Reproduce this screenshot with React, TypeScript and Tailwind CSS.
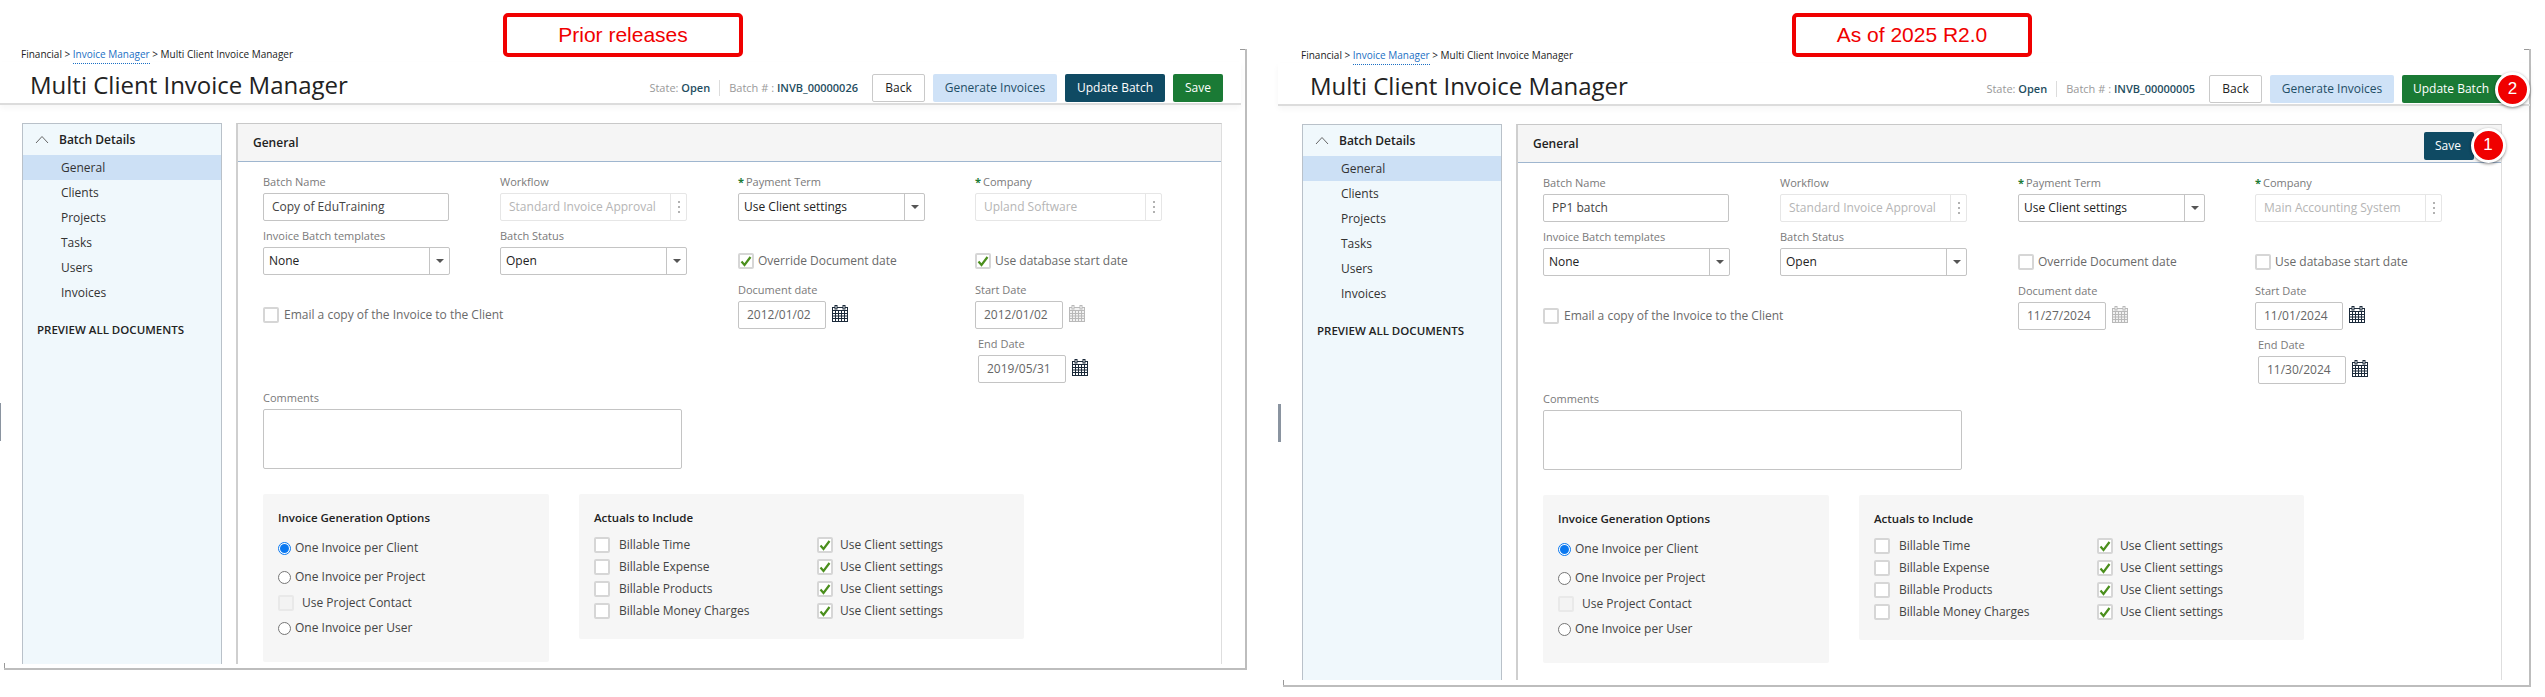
import React from "react";

function Check({ on, faint }: { on?: boolean; faint?: boolean }) {
  return (
    <span
      className={
        faint
          ? "flex h-4 w-4 shrink-0 items-center justify-center rounded-[2px] border-2 border-[#e9e9e9] bg-[#f3f3f3]"
          : "flex h-4 w-4 shrink-0 items-center justify-center rounded-[2px] border-2 border-[#d6d6d6] bg-white"
      }
    >
      {on && (
        <svg width="12" height="12" viewBox="0 0 12 12">
          <path d="M1.5 6.5 L4.5 10 L10.5 2" fill="none" stroke="#4b8f1d" strokeWidth="2.2" />
        </svg>
      )}
    </span>
  );
}

function Radio({ on }: { on?: boolean }) {
  return (
    <span
      className={
        on
          ? "flex h-[13px] w-[13px] shrink-0 items-center justify-center rounded-full border border-[#0a78f0] bg-white"
          : "flex h-[13px] w-[13px] shrink-0 items-center justify-center rounded-full border border-[#767676] bg-white"
      }
    >
      {on && <span className="h-[9px] w-[9px] rounded-full bg-[#0a78f0]" />}
    </span>
  );
}

function Calendar({ off }: { off?: boolean }) {
  const c = off ? "#b9b9b9" : "#1b2a3a";
  return (
    <svg width="16" height="17" viewBox="0 0 16 17" className="block shrink-0">
      <rect x="0.5" y="2.5" width="15" height="14" fill={off ? "#f2f2f2" : "#fff"} stroke={c} />
      <rect x="0.5" y="2.5" width="15" height="3" fill="none" stroke={c} />
      <path d="M0 8.5H16M0 11H16M0 13.5H16M3.5 6V16M6.5 6V16M9.5 6V16M12.5 6V16" stroke={c} strokeWidth="1" />
      <rect x="3" y="0.5" width="2" height="3.5" fill="#fff" stroke={c} />
      <rect x="11" y="0.5" width="2" height="3.5" fill="#fff" stroke={c} />
    </svg>
  );
}

function Label({ children, req }: { children: React.ReactNode; req?: boolean }) {
  return (
    <div className="h-[14px] whitespace-nowrap text-[11px] leading-[14px] text-[#7a7a7a]">
      {req && <span className="mr-[2px] font-bold text-[#1a7a35]">*</span>}
      {children}
    </div>
  );
}

function TextBox({ value }: { value: string }) {
  return (
    <div className="mt-[4px] flex h-[28px] w-[186px] items-center rounded-[2px] border border-[#c4c4c4] bg-white pl-[8px] text-[12px] text-[#444]">
      {value}
    </div>
  );
}

function Lookup({ value }: { value: string }) {
  return (
    <div className="mt-[4px] flex h-[28px] w-[187px] items-center rounded-[2px] border border-[#e6e6e6] bg-white text-[12px] text-[#b5b5b5]">
      <span className="min-w-0 flex-1 overflow-hidden whitespace-nowrap pl-[8px]">{value}</span>
      <span className="flex h-full w-[16px] shrink-0 flex-col items-center justify-center gap-[3px] border-l border-[#e6e6e6]">
        <i className="h-[2px] w-[2px] rounded-full bg-[#999]" />
        <i className="h-[2px] w-[2px] rounded-full bg-[#999]" />
        <i className="h-[2px] w-[2px] rounded-full bg-[#999]" />
      </span>
    </div>
  );
}

function Select({ value }: { value: string }) {
  return (
    <div className="mt-[4px] flex h-[28px] w-[187px] items-center rounded-[2px] border border-[#c4c4c4] bg-white text-[12px] text-[#222]">
      <span className="flex-1 pl-[5px]">{value}</span>
      <span className="flex h-full w-[20px] items-center justify-center border-l border-[#c4c4c4]">
        <i className="h-0 w-0 border-x-[4px] border-t-[4px] border-x-transparent border-t-[#555]" />
      </span>
    </div>
  );
}

function DateBox({ value, off }: { value: string; off?: boolean }) {
  return (
    <div className="mt-[4px] flex items-center gap-[6px]">
      <div className="flex h-[28px] w-[88px] items-center rounded-[2px] border border-[#c4c4c4] bg-white pl-[8px] text-[12px] text-[#666]">
        {value}
      </div>
      <span className="-mt-[3px]">
        <Calendar off={off} />
      </span>
    </div>
  );
}

function CheckRow({ on, children }: { on?: boolean; children: React.ReactNode }) {
  return (
    <div className="mt-[32px] flex h-4 items-center gap-[4px] whitespace-nowrap text-[12px] text-[#6a6a6a]">
      <Check on={on} />
      {children}
    </div>
  );
}

function Badge({ n, cls }: { n: string; cls: string }) {
  return (
    <span
      className={
        "absolute flex h-[35px] w-[35px] items-center justify-center rounded-full border-[3px] border-white bg-[#f00000] font-['Liberation_Sans',sans-serif] text-[17px] text-white shadow-[0_1px_3px_rgba(0,0,0,0.45)] " +
        cls
      }
    >
      {n}
    </span>
  );
}

type PanelProps = {
  right: boolean;
  caption: string;
  batch: string;
  name: string;
  company: string;
  overrideOn: boolean;
  docDate: string;
  start: string;
  end: string;
};

function Panel(p: PanelProps) {
  const rowsA = ["Billable Time", "Billable Expense", "Billable Products", "Billable Money Charges"];
  return (
    <section className={p.right ? "relative mt-[1px] ml-[33px] h-[686px] w-[1251px] pt-[46px]" : "relative h-[670px] w-[1247px] pt-[46px]"}>
      {/* outer frame */}
      <div
        className={
          p.right
            ? "absolute top-[48px] right-0 bottom-0 left-[3px] border-r-2 border-b-2 border-[#bdbdbd]"
            : "absolute top-[49px] right-0 bottom-0 left-[4px] border-r-2 border-b-2 border-[#bdbdbd]"
        }
      >
        <i className="absolute top-0 right-0 h-[1px] w-[5px] bg-[#999]" />
        <i className="absolute bottom-0 left-0 h-[5px] w-[1px] bg-[#999]" />
      </div>
      {/* splitter handle */}
      <i
        className={
          p.right
            ? "absolute top-[403px] -left-[2px] h-[38px] w-[3px] bg-[#8a94a0]"
            : "absolute top-[403px] left-0 h-[38px] w-[1px] bg-[#8a94a0]"
        }
      />
      {/* caption */}
      <div
        className={
          p.right
            ? "absolute top-[12px] left-[512px] flex h-[44px] w-[240px] items-center justify-center rounded-[5px] border-4 border-[#f00000] bg-white font-['Liberation_Sans',sans-serif] text-[21px] text-[#f00000]"
            : "absolute top-[13px] left-[503px] flex h-[44px] w-[240px] items-center justify-center rounded-[5px] border-4 border-[#f00000] bg-white font-['Liberation_Sans',sans-serif] text-[21px] text-[#f00000]"
        }
      >
        {p.caption}
      </div>

      <div className="relative h-4 whitespace-nowrap pl-[21px] text-[10px] leading-[16px] text-[#222]">
        Financial &gt; <span className="border-b border-dotted border-[#1a6fc4] pb-[2px] text-[#1a6fc4]">Invoice Manager</span> &gt; Multi Client Invoice Manager
      </div>

      <header
        className={
          p.right
            ? "relative -ml-[2px] flex w-[1252px] items-start border-b-2 border-[#dcdcdc] pt-[12px] pr-[28px] pb-[1px] pl-[32px] shadow-[0_3px_6px_rgba(0,0,0,0.04)]"
            : "relative flex w-[1241px] items-start border-b-2 border-[#dcdcdc] pt-[12px] pr-[18px] pb-[1px] pl-[30px] shadow-[0_3px_6px_rgba(0,0,0,0.04)]"
        }
      >
        <h1 className="h-[28px] text-[24px] leading-[22px] font-normal whitespace-nowrap text-[#222]">Multi Client Invoice Manager</h1>
        <div className="ml-auto flex h-[28px] items-center whitespace-nowrap text-[11px] text-[#999]">
          <span>
            State: <b className="font-semibold text-[#1f4e5f]">Open</b>
          </span>
          <i className="mx-[9px] h-[16px] w-px bg-[#dcdcdc]" />
          <span>
            Batch # : <b className="font-semibold text-[#1f4e5f]">{p.batch}</b>
          </span>
          <button className="ml-[14px] h-[28px] w-[53px] rounded-[2px] border border-[#c9c9c9] bg-white text-[12px] text-[#222]">Back</button>
          <button className="ml-[8px] h-[28px] w-[124px] rounded-[2px] bg-[#cfe2f7] text-[12px] text-[#1f4e66]">Generate Invoices</button>
          {p.right ? (
            <button className="relative ml-[8px] h-[28px] w-[100px] rounded-[2px] bg-[#1a7a35] pr-[2px] text-[12px] text-white">
              Update Batch
              <Badge n="2" cls="top-[-3.5px] left-[93px]" />
            </button>
          ) : (
            <>
              <button className="ml-[8px] h-[28px] w-[100px] rounded-[2px] bg-[#0f4a63] text-[12px] text-white">Update Batch</button>
              <button className="ml-[8px] h-[28px] w-[50px] rounded-[2px] bg-[#1a7a35] text-[12px] text-white">Save</button>
            </>
          )}
        </div>
      </header>

      <div className={p.right ? "flex h-[574px] pt-[18px] pl-[22px]" : "flex h-[559px] pt-[18px] pl-[22px]"}>
        <aside className="h-full w-[200px] shrink-0 border-x border-t border-[#b9c1c9] bg-[#f0f8fc] text-[12px] text-[#333]">
          <div className="flex h-[31px] items-center pl-[12px] font-semibold text-[#222]">
            <svg width="14" height="9" viewBox="0 0 14 9" className="mr-[10px]">
              <path d="M1 8 L7 1.5 L13 8" fill="none" stroke="#666" strokeWidth="1" />
            </svg>
            <span>Batch Details</span>
          </div>
          {["General", "Clients", "Projects", "Tasks", "Users", "Invoices"].map((t, i) => (
            <div key={t} className={i === 0 ? "flex h-[25px] items-center bg-[#cce0f5] pl-[38px]" : "flex h-[25px] items-center pl-[38px]"}>
              {t}
            </div>
          ))}
          <div className="mt-[12px] flex h-[25px] items-center pl-[14px] text-[11.5px] font-semibold whitespace-nowrap text-[#222]">PREVIEW ALL DOCUMENTS</div>
        </aside>

        <main className="ml-[14px] h-full w-[986px] shrink-0 border-t border-r border-l-2 border-t-[#c8c8c8] border-r-[#dedede] border-l-[#cfcfcf] bg-white">
          <div className={p.right ? "relative flex h-[38px] justify-between border-b border-[#9fb6cf] bg-[#f5f5f5] pr-[27px] pl-[15px]" : "flex h-[38px] border-b border-[#9fb6cf] bg-[#f5f5f5] pl-[15px]"}>
            <span className="self-center text-[12px] font-semibold text-[#222]">General</span>
            {p.right && (
              <button className="relative mt-[7px] h-[28px] w-[50px] rounded-[2px] bg-[#0f4a63] pr-[2px] text-[12px] text-white">
                Save
                <Badge n="1" cls="top-[-4.5px] left-[46.5px]" />
              </button>
            )}
          </div>

          <div className="pt-[13px] pl-[25px]">
            <div className="grid grid-cols-[237px_238px_237px_237px] items-start">
              <div>
                <Label>Batch Name</Label>
                <TextBox value={p.name} />
                <div className="mt-[8px]">
                  <Label>Invoice Batch templates</Label>
                </div>
                <Select value="None" />
                <div className="mt-[32px] flex h-4 items-center gap-[5px] whitespace-nowrap text-[12px] text-[#6a6a6a]">
                  <Check />
                  Email a copy of the Invoice to the Client
                </div>
              </div>
              <div>
                <Label>Workflow</Label>
                <Lookup value="Standard Invoice Approval" />
                <div className="mt-[8px]">
                  <Label>Batch Status</Label>
                </div>
                <Select value="Open" />
              </div>
              <div>
                <Label req>Payment Term</Label>
                <Select value="Use Client settings" />
                <CheckRow on={p.overrideOn}>Override Document date</CheckRow>
                <div className="mt-[14px]">
                  <Label>Document date</Label>
                </div>
                <DateBox value={p.docDate} off={!p.overrideOn} />
              </div>
              <div>
                <Label req>Company</Label>
                <Lookup value={p.company} />
                <CheckRow on={p.overrideOn}>Use database start date</CheckRow>
                <div className="mt-[14px]">
                  <Label>Start Date</Label>
                </div>
                <DateBox value={p.start} off={p.overrideOn} />
                <div className="mt-[8px] ml-[3px]">
                  <Label>End Date</Label>
                  <DateBox value={p.end} />
                </div>
              </div>
            </div>

            <div className="mt-[8px]">
              <Label>Comments</Label>
            </div>
            <div className="mt-[4px] h-[60px] w-[419px] rounded-[2px] border border-[#c4c4c4] bg-white" />

            <div className="mt-[25px] flex items-start gap-[30px] text-[12px] text-[#444]">
              <div className="h-[168px] w-[286px] rounded-[2px] bg-[#f6f6f6] pt-[16px] pl-[15px]">
                <div className="h-4 text-[11.5px] leading-[16px] font-semibold text-[#222]">Invoice Generation Options</div>
                <div className="mt-[12px] flex h-5 items-center gap-[4px]">
                  <Radio on /> One Invoice per Client
                </div>
                <div className="mt-[9px] flex h-5 items-center gap-[4px]">
                  <Radio /> One Invoice per Project
                </div>
                <div className="mt-[6px] flex h-5 items-center gap-[8px]">
                  <Check faint /> Use Project Contact
                </div>
                <div className="mt-[5px] flex h-5 items-center gap-[4px]">
                  <Radio /> One Invoice per User
                </div>
              </div>
              <div className="h-[145px] w-[445px] rounded-[2px] bg-[#f6f6f6] pt-[16px] pl-[15px]">
                <div className="h-4 text-[11.5px] leading-[16px] font-semibold text-[#222]">Actuals to Include</div>
                <div className="mt-[9px] grid grid-cols-[223px_200px] gap-y-[2px]">
                  {rowsA.map((t) => (
                    <React.Fragment key={t}>
                      <div className="flex h-5 items-center gap-[9px]">
                        <Check /> {t}
                      </div>
                      <div className="flex h-5 items-center gap-[7px]">
                        <Check on /> Use Client settings
                      </div>
                    </React.Fragment>
                  ))}
                </div>
              </div>
            </div>
          </div>
        </main>
      </div>
    </section>
  );
}

export default function App() {
  return (
    <div className="flex h-[697px] w-[2545px] items-start overflow-hidden bg-white font-['Open_Sans',sans-serif]">
      <Panel
        right={false}
        caption="Prior releases"
        batch="INVB_00000026"
        name="Copy of EduTraining"
        company="Upland Software"
        overrideOn={true}
        docDate="2012/01/02"
        start="2012/01/02"
        end="2019/05/31"
      />
      <Panel
        right={true}
        caption="As of 2025 R2.0"
        batch="INVB_00000005"
        name="PP1 batch"
        company="Main Accounting System"
        overrideOn={false}
        docDate="11/27/2024"
        start="11/01/2024"
        end="11/30/2024"
      />
    </div>
  );
}
